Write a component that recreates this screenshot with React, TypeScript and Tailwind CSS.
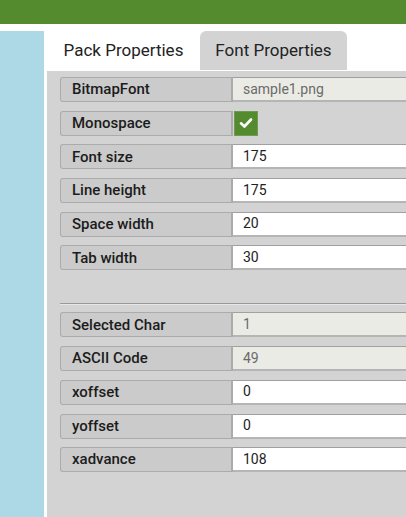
import React from "react";

type Row = { label: string; value?: string; disabled?: boolean; checkbox?: boolean };

const top: Row[] = [
  { label: "BitmapFont", value: "sample1.png", disabled: true },
  { label: "Monospace", checkbox: true },
  { label: "Font size", value: "175" },
  { label: "Line height", value: "175" },
  { label: "Space width", value: "20" },
  { label: "Tab width", value: "30" },
];

const bottom: Row[] = [
  { label: "Selected Char", value: "1", disabled: true },
  { label: "ASCII Code", value: "49", disabled: true },
  { label: "xoffset", value: "0" },
  { label: "yoffset", value: "0" },
  { label: "xadvance", value: "108" },
];

function PropRow({ row }: { row: Row }) {
  return (
    <div className="flex h-[25px] items-stretch">
      <div className="flex w-[173px] shrink-0 items-center rounded-l-[3px] border border-r-2 border-[#ababab] bg-[#cbcbcb] pl-[11px] text-[15px] font-medium text-[#1c1c1c]">
        {row.label}
      </div>
      {row.checkbox ? (
        <div className="flex flex-1 items-center pl-px">
          <div className="flex h-[25px] w-[24px] items-center justify-center border border-[#6f9a50] bg-[#558b2f]">
            <svg width="14" height="12" viewBox="0 0 14 12">
              <path d="M2 6.3 L5.4 9.5 L12 2.5" fill="none" stroke="#fff" strokeWidth="2.6" strokeLinecap="round" strokeLinejoin="round" />
            </svg>
          </div>
        </div>
      ) : (
        <div
          className={
            "flex flex-1 items-center border-t border-b-2 border-t-[#a0a0a0] border-b-[#b5b5b5] pl-[10px] text-[14px] " +
            (row.disabled ? "bg-[#ebebe6] text-[#6a6a6a]" : "bg-white text-[#222]")
          }
        >
          {row.value}
        </div>
      )}
    </div>
  );
}

export default function App() {
  return (
    <div className="flex h-[517px] w-[406px] flex-col overflow-hidden bg-white" style={{ fontFamily: "Roboto, 'Liberation Sans', sans-serif" }}>
      <div className="h-[24px] shrink-0 bg-[#558b2f]" />
      <div className="mt-[7px] flex flex-1">
        <div className="w-[44px] shrink-0 bg-[#add8e6]" />
        <div className="ml-[3px] flex flex-1 flex-col">
          <div className="flex h-[40px] shrink-0 items-center pb-px text-[17px] text-[#222]">
            <div className="flex h-full w-[153px] items-center justify-center">Pack Properties</div>
            <div className="flex h-full w-[147px] items-center justify-center rounded-t-[6px] bg-[#d3d3d3]">Font Properties</div>
          </div>
          <div className="flex flex-1 flex-col bg-[#d3d3d3] pl-[13px] pt-[6px]">
            <div className="flex flex-col gap-[8.7px]">
              {top.map((r) => (
                <PropRow key={r.label} row={r} />
              ))}
            </div>
            <div className="mt-[33px] h-[2px] border-t border-b border-t-[#9a9a9a] border-b-[#e6e6e6]" />
            <div className="mt-[7px] flex flex-col gap-[8.7px]">
              {bottom.map((r) => (
                <PropRow key={r.label} row={r} />
              ))}
            </div>
          </div>
        </div>
      </div>
    </div>
  );
}
